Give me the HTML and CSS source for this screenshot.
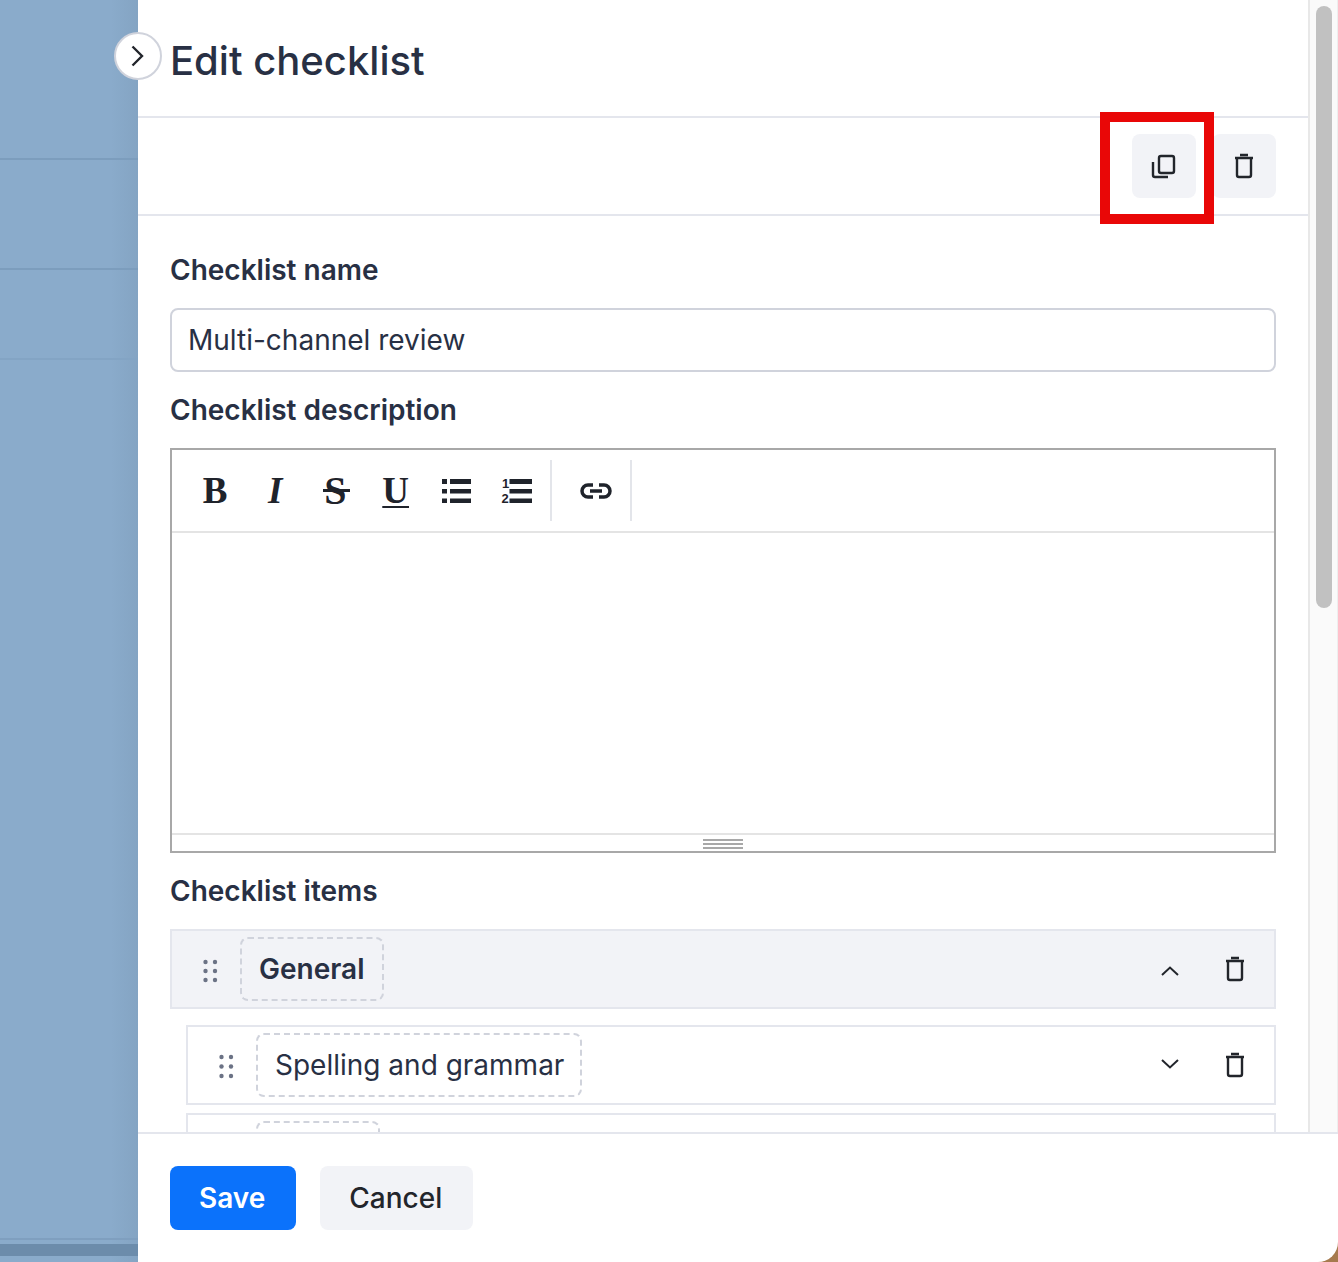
FILE: index.html
```html
<!DOCTYPE html>
<html lang="en">
<head>
    <meta charset="UTF-8">
    <meta name="viewport" content="width=device-width, initial-scale=1.0">
    <title>Edit checklist</title>
    <link rel="stylesheet" href="styles.css">
</head>
<body>
    <div class="backdrop">
        <div class="backdrop-row backdrop-row-1"></div>
        <div class="backdrop-row backdrop-row-2"></div>
        <div class="backdrop-row backdrop-row-3"></div>
        <div class="backdrop-fill"></div>
        <div class="backdrop-band"></div>
    </div>

    <aside class="drawer">
        <button class="collapse-btn" type="button" aria-label="Collapse">
            <svg class="icon" viewBox="0 0 32 32"><path d="M10.500 6.500 20 16l-9.500 9.500"/></svg>
        </button>

        <div class="drawer-scroll">
            <div class="drawer-content">
                <header class="drawer-header">
                    <h1>Edit checklist</h1>
                </header>

                <div class="action-bar">
                    <button class="icon-btn" type="button" aria-label="Duplicate">
                        <svg class="icon" viewBox="0 0 32 32">
                            <rect x="11" y="6" width="15" height="17" rx="2"/>
                            <path d="M5 12v13a2 2 0 0 0 2 2h13"/>
                        </svg>
                    </button>
                    <button class="icon-btn" type="button" aria-label="Delete">
                        <svg class="icon" viewBox="0 0 32 32">
                            <path d="M7 8h18M12 5h8M9 8v17a2 2 0 0 0 2 2h10a2 2 0 0 0 2-2V8"/>
                        </svg>
                    </button>
                </div>

                <form class="checklist-form">
                    <label class="field-label" for="checklist-name">Checklist name</label>
                    <input class="text-input" id="checklist-name" type="text" value="Multi-channel review">

                    <label class="field-label">Checklist description</label>
                    <div class="editor">
                        <div class="editor-toolbar">
                            <div class="editor-group">
                                <span class="editor-btn glyph-bold">B</span>
                                <span class="editor-btn glyph-italic">I</span>
                                <span class="editor-btn glyph-strike">S</span>
                                <span class="editor-btn glyph-underline">U</span>
                                <span class="editor-btn">
                                    <svg class="editor-icon" viewBox="0 0 32 32">
                                        <path d="M2 4h5v5H2zM2 14h5v4.500H2zM2 23.500h5V28H2zM10 4h21v5H10zM10 14h21v4.500H10zM10 23.500h21V28H10z"/>
                                    </svg>
                                </span>
                                <span class="editor-btn">
                                    <svg class="editor-icon" viewBox="0 0 32 32">
                                        <path d="M9.500 4H32v5H9.500zM9.500 14H32v4.500H9.500zM9.500 23.500H32V28H9.500z"/>
                                        <text class="list-number" x="2" y="13">1</text>
                                        <text class="list-number" x="1.500" y="28">2</text>
                                    </svg>
                                </span>
                            </div>
                            <div class="editor-group">
                                <span class="editor-btn">
                                    <svg class="editor-icon link-icon" viewBox="0 0 32 32">
                                        <path d="M13 10H8a6 6 0 0 0 0 12h5M19 10h5a6 6 0 0 1 0 12h-5M10 16h12"/>
                                    </svg>
                                </span>
                            </div>
                        </div>
                        <div class="editor-body"></div>
                        <div class="editor-status"><span class="editor-grip"></span></div>
                    </div>

                    <label class="field-label">Checklist items</label>
                    <div class="item-list">
                        <div class="item-row item-section">
                            <svg class="grip" viewBox="0 0 32 32">
                                <circle cx="11.500" cy="9" r="2.200"/><circle cx="21" cy="9" r="2.200"/>
                                <circle cx="11.500" cy="18" r="2.200"/><circle cx="21" cy="18" r="2.200"/>
                                <circle cx="11.500" cy="27" r="2.200"/><circle cx="21" cy="27" r="2.200"/>
                            </svg>
                            <span class="item-name">General</span>
                            <svg class="icon item-toggle" viewBox="0 0 32 32"><path d="M8 22l8-7.500 8 7.500"/></svg>
                            <svg class="icon" viewBox="0 0 32 32">
                                <path d="M7 8h18M12 5h8M9 8v17a2 2 0 0 0 2 2h10a2 2 0 0 0 2-2V8"/>
                            </svg>
                        </div>
                        <div class="item-row item-child">
                            <svg class="grip" viewBox="0 0 32 32">
                                <circle cx="11.500" cy="8" r="2.200"/><circle cx="21" cy="8" r="2.200"/>
                                <circle cx="11.500" cy="17.500" r="2.200"/><circle cx="21" cy="17.500" r="2.200"/>
                                <circle cx="11.500" cy="27" r="2.200"/><circle cx="21" cy="27" r="2.200"/>
                            </svg>
                            <span class="item-name">Spelling and grammar</span>
                            <svg class="icon item-toggle" viewBox="0 0 32 32"><path d="M8 11l8 7.500 8-7.500"/></svg>
                            <svg class="icon" viewBox="0 0 32 32">
                                <path d="M7 8h18M12 5h8M9 8v17a2 2 0 0 0 2 2h10a2 2 0 0 0 2-2V8"/>
                            </svg>
                        </div>
                        <div class="item-row item-child">
                            <svg class="grip" viewBox="0 0 32 32"></svg>
                            <span class="item-name item-name-clipped"></span>
                        </div>
                    </div>
                </form>
            </div>
            <div class="scrollbar"><div class="scrollbar-thumb"></div></div>
        </div>

        <footer class="drawer-footer">
            <button class="btn btn-primary" type="button">Save</button>
            <button class="btn btn-secondary" type="button">Cancel</button>
        </footer>

        <div class="highlight-box"></div>
    </aside>
</body>
</html>
```

FILE: styles.css
```css
* {
    box-sizing: border-box;
}

html, body {
    height: 100%;
}

body {
    margin: 0;
    display: flex;
    overflow: hidden;
    background-color: #a67a4e;
    font-family: Inter, "Liberation Sans", sans-serif;
    color: #283044;
}

.icon {
    flex: none;
    width: 32px;
    height: 32px;
    fill: none;
    stroke: #22252b;
    stroke-width: 2.400;
}

/* page behind the drawer */
.backdrop {
    flex: none;
    width: 138px;
    display: flex;
    flex-direction: column;
    background: linear-gradient(to right, #8aabcb 80%, #84a4c3);
}

.backdrop-row {
    border-bottom: 2px solid #7c9dbd;
}

.backdrop-row-1 {
    height: 160px;
}

.backdrop-row-2 {
    height: 110px;
}

.backdrop-row-3 {
    height: 90px;
    border-bottom-color: #83a4c4;
}

.backdrop-fill {
    flex: 1;
    margin-bottom: 4px;
    border-bottom: 2px solid #7f9fbf;
}

.backdrop-band {
    height: 12px;
    margin-bottom: 6px;
    background-color: #6c8cab;
}

/* drawer */
.drawer {
    position: relative;
    flex: 1;
    display: flex;
    flex-direction: column;
    min-width: 0;
    background-color: #fff;
    border-bottom-right-radius: 20px;
}

.collapse-btn {
    position: absolute;
    top: 32px;
    left: -24px;
    width: 48px;
    height: 48px;
    padding: 0;
    display: flex;
    align-items: center;
    justify-content: center;
    background-color: #fff;
    border: 2px solid #d0d3dc;
    border-radius: 50%;
}

.drawer-scroll {
    height: 1132px;
    display: flex;
    overflow: hidden;
}

.drawer-content {
    flex: 1;
    min-width: 0;
}

.drawer-header {
    height: 118px;
    padding: 32px 32px 0;
    border-bottom: 2px solid #e4e6ed;
}

.drawer-header h1 {
    margin: 0;
    font-size: 40px;
    font-weight: 500;
    line-height: 58px;
}

.action-bar {
    height: 98px;
    padding: 16px 32px;
    display: flex;
    justify-content: flex-end;
    gap: 16px;
    border-bottom: 2px solid #e4e6ed;
}

.icon-btn {
    width: 64px;
    height: 64px;
    padding: 0;
    display: flex;
    align-items: center;
    justify-content: center;
    background-color: #f2f3f7;
    border: none;
    border-radius: 8px;
}

.checklist-form {
    padding: 32px 32px 0;
    display: flex;
    flex-direction: column;
    gap: 16px;
}

.field-label {
    font-size: 28px;
    font-weight: 600;
    line-height: 44px;
}

.text-input {
    height: 64px;
    padding: 0 16px;
    border: 2px solid #d0d3dc;
    border-radius: 8px;
    font-family: Inter, "Liberation Sans", sans-serif;
    font-size: 28px;
    color: #283044;
}

/* rich text editor */
.editor {
    height: 405px;
    display: flex;
    flex-direction: column;
    border: 2px solid #a8a8a8;
}

.editor-toolbar {
    height: 83px;
    padding: 10px 13px;
    display: flex;
    gap: 14px;
    border-bottom: 2px solid #e4e4e4;
}

.editor-group {
    display: flex;
    padding-right: 4px;
    border-right: 2px solid #e3e5ea;
}

.editor-btn {
    position: relative;
    width: 60.200px;
    display: flex;
    align-items: center;
    justify-content: center;
    font-family: "Liberation Serif", serif;
    font-size: 37px;
    font-weight: 700;
    color: #1f232b;
}

.glyph-italic {
    font-style: italic;
}

.glyph-strike {
    font-size: 40px;
}

.glyph-strike::after {
    content: "";
    position: absolute;
    top: 29px;
    left: 18px;
    width: 27px;
    height: 3px;
    background-color: #1f232b;
}

.glyph-underline {
    text-decoration: underline;
    text-decoration-thickness: 2px;
    text-underline-offset: 3px;
}

.editor-icon {
    width: 32px;
    height: 32px;
    fill: #1f232b;
}

.link-icon {
    fill: none;
    stroke: #1f232b;
    stroke-width: 3.500;
}

.list-number {
    font-family: "Liberation Sans", sans-serif;
    font-size: 13px;
    font-weight: 700;
}

.editor-body {
    flex: 1;
}

.editor-status {
    height: 18px;
    display: flex;
    justify-content: center;
    border-top: 2px solid #e4e4e4;
}

.editor-grip {
    width: 40px;
    height: 10px;
    margin-top: 4px;
    border-top: 2px solid #a8a8a8;
    border-bottom: 2px solid #a8a8a8;
    background: linear-gradient(#a8a8a8, #a8a8a8) center / 100% 2px no-repeat;
}

/* checklist items */
.item-list {
    display: flex;
    flex-direction: column;
    gap: 8px;
}

.item-row {
    flex: none;
    height: 80px;
    padding: 6px 23px 6px 22px;
    display: flex;
    align-items: center;
    gap: 14px;
    border: 2px solid #e4e6ed;
}

.item-section {
    margin-bottom: 8px;
    background-color: #f2f3f7;
}

.item-section .item-name {
    padding-right: 18px;
    font-weight: 600;
}

.item-child {
    margin-left: 16px;
}

.grip {
    flex: none;
    width: 32px;
    height: 32px;
    fill: #6b7285;
}

.item-name {
    height: 64px;
    padding: 0 16px 0 17px;
    display: flex;
    align-items: center;
    border: 2px dashed #d0d3dc;
    border-radius: 8px;
    font-size: 28px;
}

.item-name-clipped {
    width: 124px;
}

.item-toggle {
    margin-left: auto;
    margin-right: 19px;
    stroke-width: 2;
}

/* scrollbar next to the content */
.scrollbar {
    flex: none;
    width: 30px;
    padding: 6px 6px 0 6px;
    background-color: #fafafa;
    border-left: 2px solid #e8e8e8;
    border-right: 1px solid #eeeeee;
}

.scrollbar-thumb {
    width: 16px;
    height: 602px;
    background-color: #c1c1c1;
    border-radius: 8px;
}

.drawer-footer {
    flex: 1;
    padding: 32px;
    display: flex;
    gap: 24px;
    border-top: 2px solid #e4e6ed;
}

.btn {
    height: 64px;
    padding: 0 31px 0 29px;
    border: none;
    border-radius: 8px;
    font-family: Inter, "Liberation Sans", sans-serif;
    font-size: 28px;
}

.btn-primary {
    background-color: #0b72fb;
    color: #fff;
    font-weight: 600;
}

.btn-secondary {
    background-color: #f2f3f7;
    color: #22252b;
    font-weight: 500;
}

/* annotation drawn over the screenshot */
.highlight-box {
    position: absolute;
    top: 112px;
    left: 962px;
    width: 114px;
    height: 112px;
    border: 10px solid #e90707;
}
```
